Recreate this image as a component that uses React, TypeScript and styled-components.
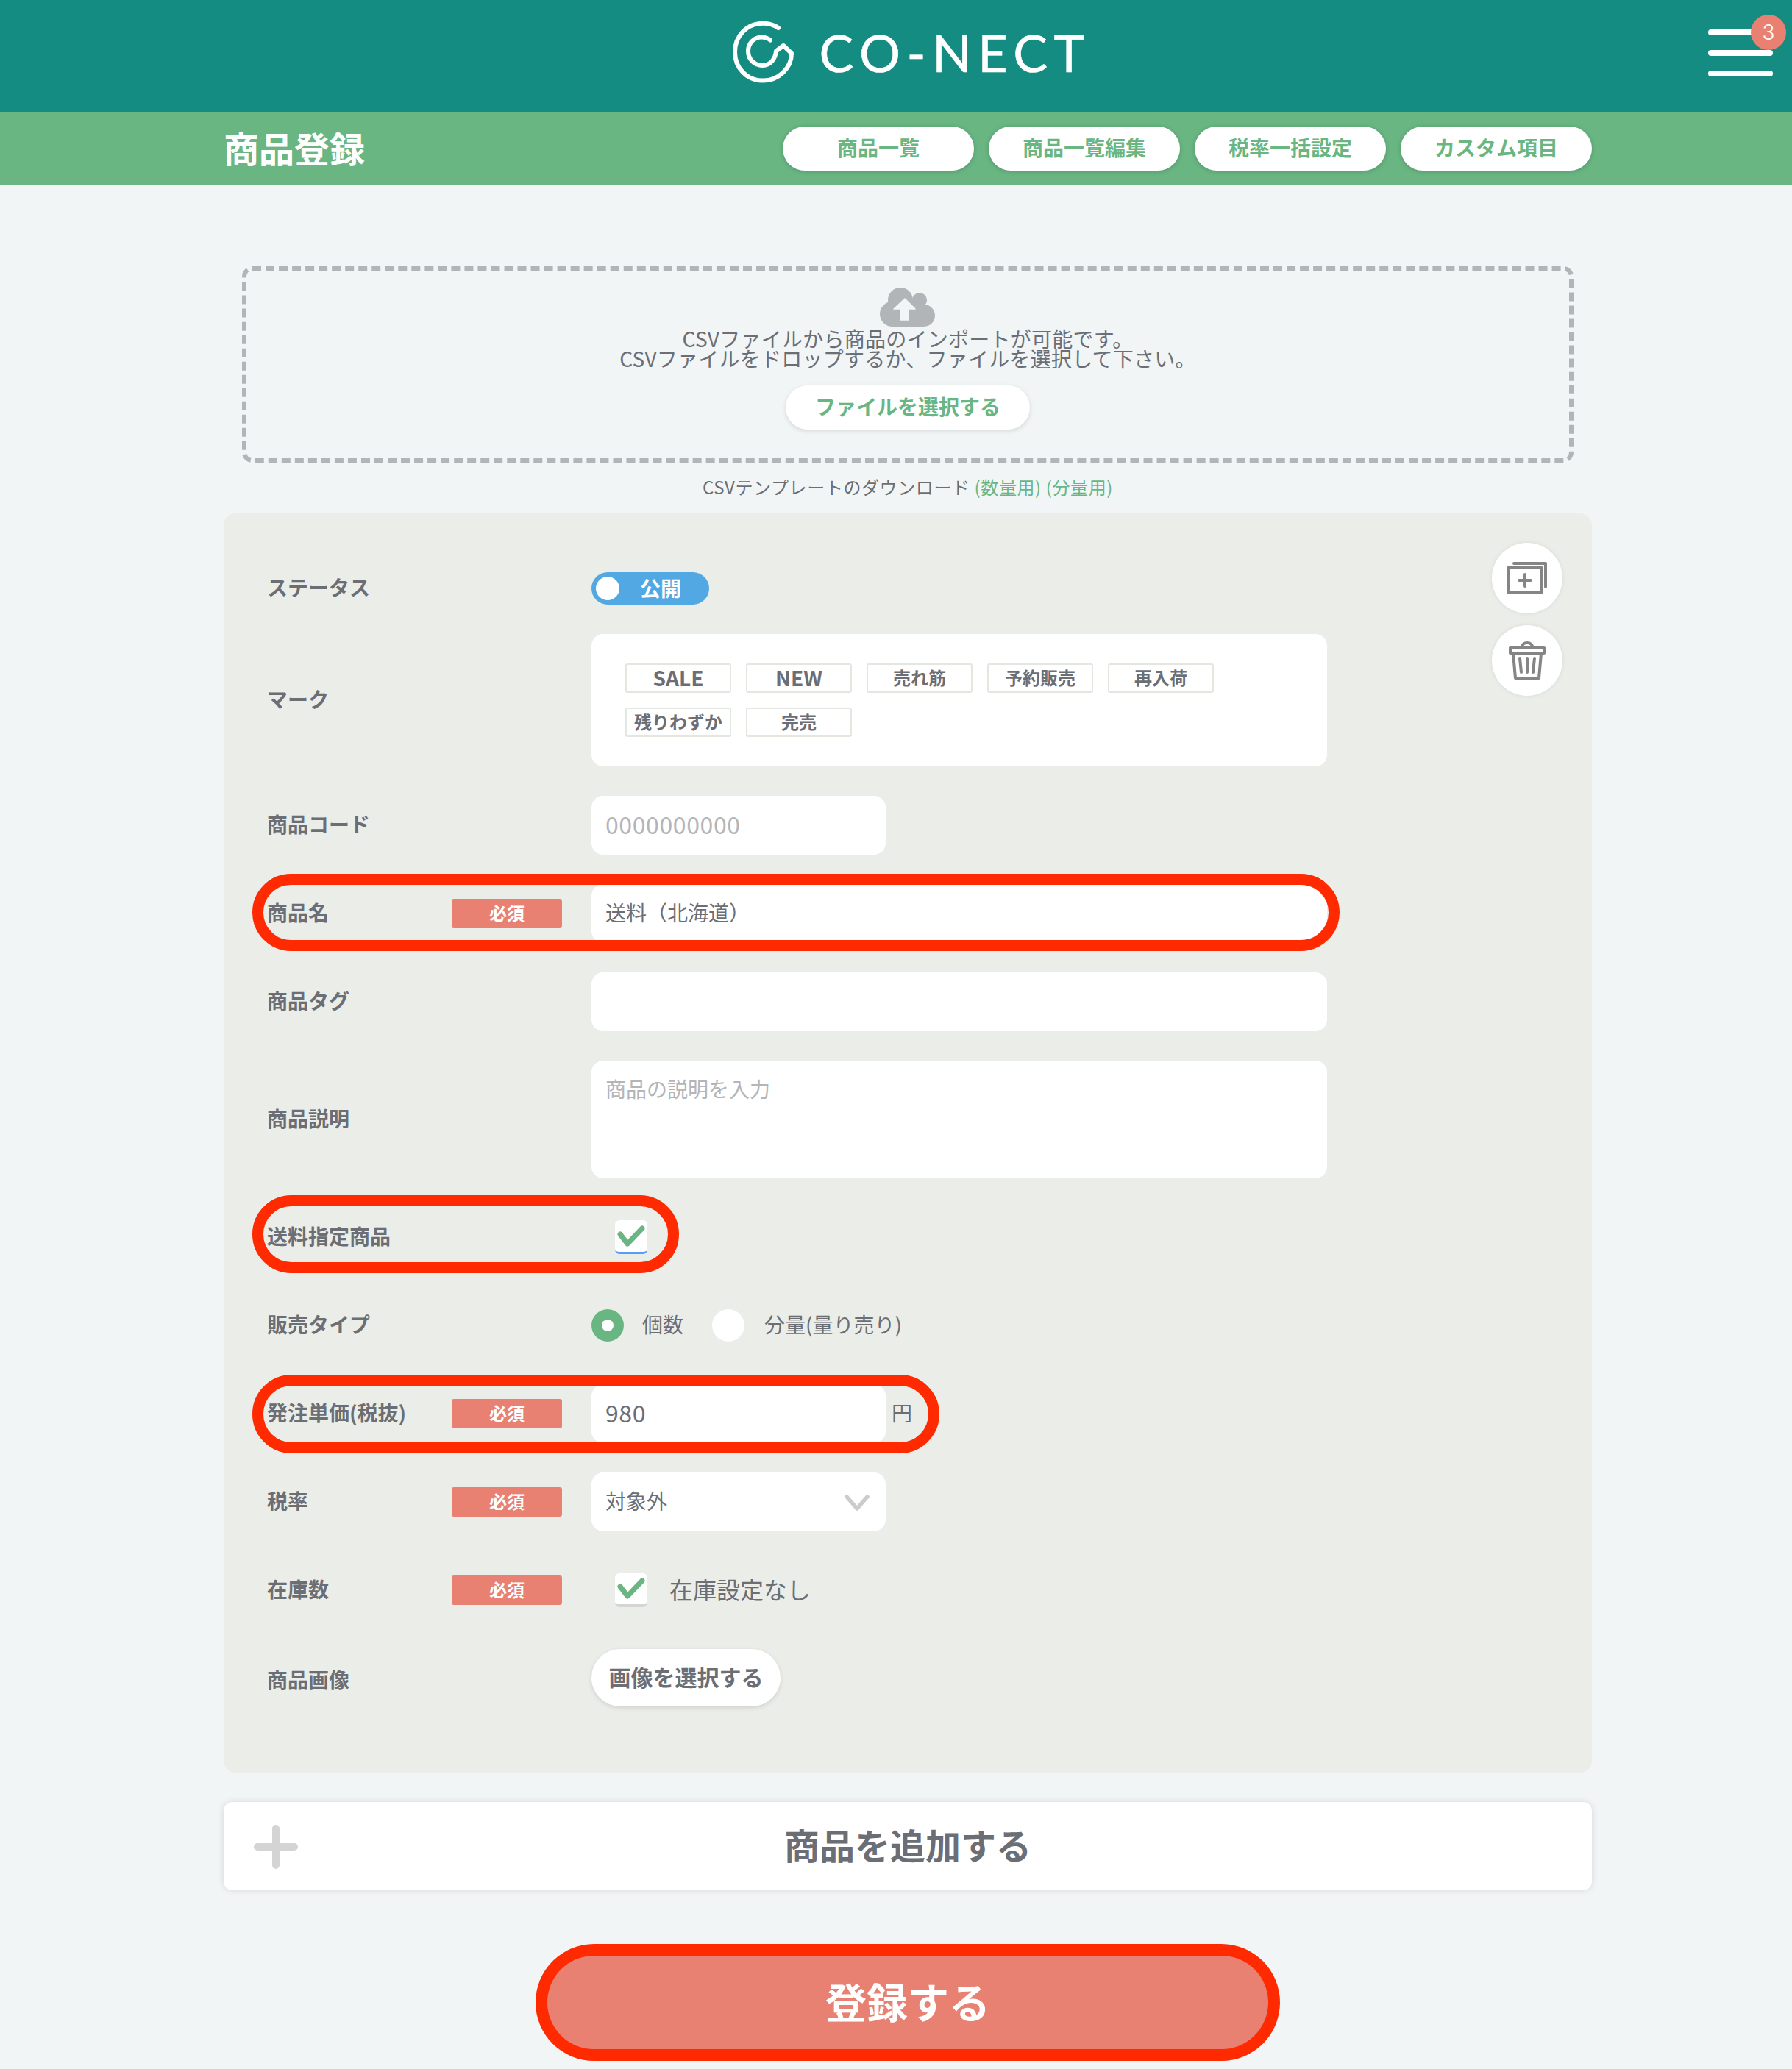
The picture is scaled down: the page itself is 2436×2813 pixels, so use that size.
import styled, { createGlobalStyle } from "styled-components"

const GREEN = "#69b683"
const TEXT = "#6b6e75"
const CORAL = "#e98172"
const RED = "#ff2a00"
const PAGE_BG = "#f1f5f6"

const GlobalStyle = createGlobalStyle`
    html, body {
        margin: 0;
        padding: 0;
        background: ${PAGE_BG};
    }
    * {
        box-sizing: border-box;
    }
    body {
        font-family: "Noto Sans CJK JP", "Noto Sans", sans-serif;
        color: ${TEXT};
    }
`

const Header = styled.header`
    height: 152px;
    background: #148c82;
    display: grid;
    grid-template-columns: 304px 1860px 1fr;
    align-items: center;
`

const Logo = styled.div`
    grid-column: 2;
    display: flex;
    justify-content: center;
    align-items: center;
    gap: 34px;
    color: #fff;
    padding-bottom: 10px;
    padding-left: 10px;
`

const LogoText = styled.span`
    font-family: "Lato", sans-serif;
    font-size: 70px;
    line-height: 1;
    font-weight: 400;
    letter-spacing: 8.6px;
    -webkit-text-stroke: 0.6px #fff;
`

const Menu = styled.div`
    position: relative;
    grid-column: 3;
    justify-self: start;
    margin-left: 158px;
    width: 88px;
    display: flex;
    flex-direction: column;
    gap: 20px;
    margin-top: -8px;
`

const MenuBar = styled.span`
    display: block;
    height: 8px;
    border-radius: 4px;
    background: #fff;
`

const MenuBadge = styled.span`
    position: absolute;
    left: 58px;
    top: -20px;
    width: 48px;
    height: 48px;
    border-radius: 50%;
    background: ${CORAL};
    color: #fff;
    font-family: "Inter", sans-serif;
    font-size: 28px;
    font-weight: 300;
    display: flex;
    align-items: center;
    justify-content: center;
`

const SubBarWrap = styled.div`
    background: ${GREEN};
`

const SubBar = styled.div`
    height: 100px;
    padding-left: 304px;
    display: flex;
    align-items: center;
    width: 2164px;
    justify-content: space-between;
`

const PageTitle = styled.h1`
    margin: 0;
    padding-bottom: 5px;
    color: #fff;
    font-size: 48px;
    font-weight: 700;
`

const SubNav = styled.nav`
    display: flex;
    gap: 20px;
`

const SubNavButton = styled.a`
    width: 260px;
    height: 60px;
    padding-bottom: 5px;
    border-radius: 30px;
    background: #fff;
    color: ${GREEN};
    font-size: 28px;
    font-weight: 700;
    display: flex;
    align-items: center;
    justify-content: center;
    box-shadow: 0 1px 6px rgba(0, 0, 0, 0.2);
`

const Main = styled.main`
    margin-left: 304px;
    width: 1860px;
    padding: 110px 0 27px;
`

const DropZone = styled.div`
    width: 1810px;
    height: 267px;
    margin-left: 25px;
    border: 6px dashed #b1b5b8;
    border-radius: 14px;
    padding-top: 23px;
    display: flex;
    flex-direction: column;
    align-items: center;
`

const CloudIcon = styled.svg`
    flex-shrink: 0;
`

const DropText = styled.p`
    margin: 3px 0 0;
    font-size: 28px;
    line-height: 27px;
    letter-spacing: 0.25px;
    text-align: center;
`

const FileButton = styled.a`
    margin-top: 23px;
    width: 332px;
    height: 60px;
    padding-bottom: 5px;
    border-radius: 30px;
    background: #fff;
    color: ${GREEN};
    font-size: 28px;
    font-weight: 700;
    display: flex;
    align-items: center;
    justify-content: center;
    box-shadow: 0 2px 6px rgba(0, 0, 0, 0.12);
`

const TemplateNote = styled.p`
    margin: 20px 0 23px;
    font-size: 24px;
    line-height: 26px;
    letter-spacing: 0.6px;
    text-align: center;
`

const GreenLink = styled.a`
    color: ${GREEN};
`

const Panel = styled.section`
    position: relative;
    background: #ebede8;
    border-radius: 16px;
    padding: 80px 0 88px;
    display: flex;
    flex-direction: column;
    gap: 40px;
`

const SideTools = styled.div`
    position: absolute;
    top: 40px;
    right: 40px;
    display: flex;
    flex-direction: column;
    gap: 16px;
`

const SideButton = styled.button`
    width: 96px;
    height: 96px;
    border: 0;
    padding: 0;
    border-radius: 50%;
    background: #fff;
    box-shadow: 0 0 6px rgba(0, 0, 0, 0.08);
    display: flex;
    align-items: center;
    justify-content: center;
`

const Row = styled.div<{ $height?: number }>`
    position: relative;
    height: ${(p) => p.$height ?? 80}px;
    padding-left: 59px;
    display: flex;
    align-items: center;
`

const LabelCell = styled.div`
    width: 441px;
    padding-right: 40px;
    display: flex;
    align-items: center;
    justify-content: space-between;
    flex-shrink: 0;
`

const Label = styled.label<{ $offset?: number }>`
    padding-bottom: 4px;
    font-size: 28px;
    font-weight: 700;
    white-space: nowrap;
    margin-top: ${(p) => p.$offset ?? 0}px;
`

const Required = styled.span`
    width: 150px;
    height: 40px;
    padding-bottom: 4px;
    border-radius: 3px;
    background: ${CORAL};
    color: #fff;
    font-size: 24px;
    font-weight: 700;
    display: flex;
    align-items: center;
    justify-content: center;
`

const Toggle = styled.div`
    width: 160px;
    height: 44px;
    border-radius: 22px;
    background: #52a8e3;
    padding-left: 6px;
    display: flex;
    align-items: center;
    gap: 28px;
`

const ToggleKnob = styled.span`
    width: 32px;
    height: 32px;
    border-radius: 50%;
    background: #fff;
`

const ToggleText = styled.span`
    padding-bottom: 3px;
    color: #fff;
    font-size: 28px;
    font-weight: 700;
`

const MarkBox = styled.div`
    width: 1000px;
    height: 180px;
    border-radius: 16px;
    background: #fff;
    padding: 40px 46px;
    display: flex;
    flex-wrap: wrap;
    align-content: flex-start;
    gap: 20px;
`

const Chip = styled.span<{ $latin?: boolean }>`
    width: 144px;
    height: 40px;
    padding-bottom: 2px;
    border: 2px solid #e2e7e0;
    border-bottom-width: 3px;
    border-radius: 3px;
    font-size: ${(p) => (p.$latin ? 28 : 24)}px;
    font-weight: 700;
    display: flex;
    align-items: center;
    justify-content: center;
`

const TextInput = styled.input<{ $width?: number }>`
    width: ${(p) => p.$width ?? 1000}px;
    height: 80px;
    border: 0;
    outline: 0;
    border-radius: 16px;
    background: #fff;
    padding: 0 19px 4px;
    font-family: inherit;
    font-size: 28px;
    color: ${TEXT};

    &::placeholder {
        color: #b3b5b9;
        opacity: 1;
    }
`

const DigitInput = styled(TextInput)`
    font-size: 32px;
    letter-spacing: 0.6px;
`

const TextArea = styled.textarea`
    width: 1000px;
    height: 160px;
    border: 0;
    outline: 0;
    resize: none;
    border-radius: 16px;
    background: #fff;
    padding: 24px 19px;
    font-family: inherit;
    font-size: 28px;
    line-height: 1;

    &::placeholder {
        color: #b3b5b9;
        opacity: 1;
    }
`

const CheckBox = styled.span<{ $focused?: boolean }>`
    width: 44px;
    height: 46px;
    margin-left: 32px;
    border-radius: 6px;
    background: #fff;
    border-bottom: ${(p) => (p.$focused ? "3px solid #5a9cf5" : "4px solid #d5d6d2")};
    display: flex;
    align-items: center;
    justify-content: center;
`

const RadioDot = styled.span<{ $on?: boolean }>`
    width: 44px;
    height: 44px;
    border-radius: 50%;
    background: ${(p) => (p.$on ? GREEN : "#fff")};
    display: flex;
    align-items: center;
    justify-content: center;

    &::after {
        content: "";
        width: 16px;
        height: 16px;
        border-radius: 50%;
        background: #fff;
    }
`

const OptionText = styled.span<{ $left: number; $right?: number; $size?: number }>`
    margin-left: ${(p) => p.$left}px;
    margin-right: ${(p) => p.$right ?? 0}px;
    padding-bottom: 4px;
    font-size: ${(p) => p.$size ?? 28}px;
`

const Unit = styled.span`
    margin-left: 8px;
    padding-bottom: 4px;
    font-size: 28px;
`

const SelectBox = styled.div`
    width: 400px;
    height: 80px;
    border-radius: 16px;
    background: #fff;
    padding: 0 22px 0 19px;
    font-size: 28px;
    display: flex;
    align-items: center;
    justify-content: space-between;
`

const SelectText = styled.span`
    padding-bottom: 4px;
`

const ImageButton = styled.a`
    width: 257px;
    height: 78px;
    padding-bottom: 5px;
    align-self: flex-start;
    border-radius: 39px;
    background: #fff;
    font-size: 30px;
    font-weight: 700;
    display: flex;
    align-items: center;
    justify-content: center;
    box-shadow: 0 2px 6px rgba(0, 0, 0, 0.12);
`

const Highlight = styled.span<{ $top: number; $width: number; $height: number }>`
    position: absolute;
    left: 39px;
    top: ${(p) => p.$top}px;
    width: ${(p) => p.$width}px;
    height: ${(p) => p.$height}px;
    border: 15px solid ${RED};
    border-radius: 54px;
    pointer-events: none;
`

const AddBar = styled.div`
    position: relative;
    margin-top: 40px;
    height: 120px;
    padding-bottom: 6px;
    border-radius: 12px;
    background: #fff;
    box-shadow: 0 0 10px rgba(0, 0, 0, 0.12);
    font-size: 48px;
    font-weight: 700;
    display: flex;
    align-items: center;
    justify-content: center;
`

const AddIcon = styled.svg`
    position: absolute;
    left: 41px;
    top: 31px;
`

const SubmitButton = styled.button`
    display: block;
    margin: 89px auto 0;
    width: 980px;
    height: 127px;
    padding: 0 0 6px;
    border: 0;
    border-radius: 64px;
    background: ${CORAL};
    box-shadow: 0 0 0 16px ${RED};
    color: #fff;
    font-family: inherit;
    font-size: 56px;
    font-weight: 700;
`

const LogoMark = () => (
    <svg width="84" height="84" viewBox="0 0 84 84" fill="none" stroke="currentColor" strokeWidth="6" strokeLinecap="round" strokeLinejoin="round">
        <path d="M62 9C56 4.5 48 2.8 41 2.8C19 2.8 3 20 3 42C3 63 19 80.5 41 80.5C63 80.5 80 63 80 43.5L69 33L59 40.5C58 50 52 60 40.5 60C29 60 21 51 21 40.5C21 30 29 21.5 39 21.5C44 21.5 48 23 51 25.5" />
    </svg>
)

const CheckMark = () => (
    <svg width="38" height="30" viewBox="0 0 38 30" fill="none" stroke={GREEN} strokeWidth="7" strokeLinecap="round" strokeLinejoin="round">
        <path d="M4 12L14 25L34 4" />
    </svg>
)

const marks = ["SALE", "NEW", "売れ筋", "予約販売", "再入荷", "残りわずか", "完売"]
const navItems = ["商品一覧", "商品一覧編集", "税率一括設定", "カスタム項目"]

export default function App() {
    return (
        <>
            <GlobalStyle />
            <Header>
                <Logo>
                    <LogoMark />
                    <LogoText>CO-NECT</LogoText>
                </Logo>
                <Menu>
                    <MenuBar />
                    <MenuBar />
                    <MenuBar />
                    <MenuBadge>3</MenuBadge>
                </Menu>
            </Header>
            <SubBarWrap>
                <SubBar>
                    <PageTitle>商品登録</PageTitle>
                    <SubNav>
                        {navItems.map((item) => (
                            <SubNavButton key={item}>{item}</SubNavButton>
                        ))}
                    </SubNav>
                </SubBar>
            </SubBarWrap>
            <Main>
                <DropZone>
                    <CloudIcon width="76" height="53" viewBox="0 0 76 53">
                        <g fill="#b1b5b8">
                            <circle cx="28" cy="17" r="17" />
                            <circle cx="54" cy="17" r="10" />
                            <circle cx="17" cy="36" r="17" />
                            <circle cx="60" cy="38" r="15" />
                            <rect x="17" y="17" width="43" height="36" />
                        </g>
                        <path fill={PAGE_BG} strokeLinejoin="round" stroke={PAGE_BG} strokeWidth="1.5" d="M34 15L19 29H28V44H39V29H48Z" />
                    </CloudIcon>
                    <DropText>
                        CSVファイルから商品のインポートが可能です。
                        <br />
                        CSVファイルをドロップするか、ファイルを選択して下さい。
                    </DropText>
                    <FileButton>ファイルを選択する</FileButton>
                </DropZone>
                <TemplateNote>
                    CSVテンプレートのダウンロード <GreenLink>(数量用)</GreenLink> <GreenLink>(分量用)</GreenLink>
                </TemplateNote>
                <Panel>
                    <SideTools>
                        <SideButton aria-label="追加">
                            <svg width="56" height="44" viewBox="0 0 56 44" fill="none" stroke="#858585" strokeWidth="4" strokeLinecap="round" strokeLinejoin="round">
                                <path d="M10 2H53V34" />
                                <rect x="2" y="8" width="46" height="34" />
                                <path d="M25 17V33M17 25H33" />
                            </svg>
                        </SideButton>
                        <SideButton aria-label="削除">
                            <svg width="50" height="52" viewBox="0 0 50 52" fill="none" stroke="#858585" strokeWidth="4" strokeLinecap="round" strokeLinejoin="round">
                                <path d="M2 8H48V16H2Z" />
                                <path d="M18 8C18 4 21 2 25 2C29 2 32 4 32 8" />
                                <path d="M6 16L9 50H41L44 16" />
                                <path d="M15 23L17 42M25 23V42M35 23L33 42" />
                            </svg>
                        </SideButton>
                    </SideTools>

                    <Row $height={44}>
                        <LabelCell>
                            <Label>ステータス</Label>
                        </LabelCell>
                        <Toggle>
                            <ToggleKnob />
                            <ToggleText>公開</ToggleText>
                        </Toggle>
                    </Row>

                    <Row $height={180}>
                        <LabelCell>
                            <Label>マーク</Label>
                        </LabelCell>
                        <MarkBox>
                            {marks.map((mark) => (
                                <Chip key={mark} $latin={/^[A-Z]+$/.test(mark)}>
                                    {mark}
                                </Chip>
                            ))}
                        </MarkBox>
                    </Row>

                    <Row>
                        <LabelCell>
                            <Label>商品コード</Label>
                        </LabelCell>
                        <DigitInput $width={400} placeholder="0000000000" readOnly />
                    </Row>

                    <Row>
                        <LabelCell>
                            <Label>商品名</Label>
                            <Required>必須</Required>
                        </LabelCell>
                        <TextInput defaultValue="送料（北海道）" readOnly />
                        <Highlight $top={-14} $width={1478} $height={105} />
                    </Row>

                    <Row>
                        <LabelCell>
                            <Label>商品タグ</Label>
                        </LabelCell>
                        <TextInput readOnly />
                    </Row>

                    <Row $height={160}>
                        <LabelCell>
                            <Label>商品説明</Label>
                        </LabelCell>
                        <TextArea placeholder="商品の説明を入力" readOnly />
                    </Row>

                    <Row>
                        <LabelCell>
                            <Label>送料指定商品</Label>
                        </LabelCell>
                        <CheckBox $focused>
                            <CheckMark />
                        </CheckBox>
                        <Highlight $top={-17} $width={580} $height={106} />
                    </Row>

                    <Row>
                        <LabelCell>
                            <Label>販売タイプ</Label>
                        </LabelCell>
                        <RadioDot $on />
                        <OptionText $left={25} $right={39}>個数</OptionText>
                        <RadioDot />
                        <OptionText $left={27}>分量(量り売り)</OptionText>
                    </Row>

                    <Row>
                        <LabelCell>
                            <Label>発注単価(税抜)</Label>
                            <Required>必須</Required>
                        </LabelCell>
                        <DigitInput $width={400} defaultValue="980" readOnly />
                        <Unit>円</Unit>
                        <Highlight $top={-13} $width={934} $height={107} />
                    </Row>

                    <Row>
                        <LabelCell>
                            <Label>税率</Label>
                            <Required>必須</Required>
                        </LabelCell>
                        <SelectBox>
                            <SelectText>対象外</SelectText>
                            <svg width="34" height="24" viewBox="0 0 34 24" fill="none" stroke="#cccccc" strokeWidth="5.5" strokeLinecap="round" strokeLinejoin="round">
                                <path d="M3 5L17 21L31 5" />
                            </svg>
                        </SelectBox>
                    </Row>

                    <Row>
                        <LabelCell>
                            <Label>在庫数</Label>
                            <Required>必須</Required>
                        </LabelCell>
                        <CheckBox>
                            <CheckMark />
                        </CheckBox>
                        <OptionText $left={30} $size={32}>在庫設定なし</OptionText>
                    </Row>

                    <Row>
                        <LabelCell>
                            <Label $offset={6}>商品画像</Label>
                        </LabelCell>
                        <ImageButton>画像を選択する</ImageButton>
                    </Row>
                </Panel>

                <AddBar>
                    <AddIcon width="60" height="60" viewBox="0 0 60 60" fill="#d4d4d4">
                        <rect x="25" y="0" width="10" height="60" rx="5" />
                        <rect x="0" y="25" width="60" height="10" rx="5" />
                    </AddIcon>
                    商品を追加する
                </AddBar>
                <SubmitButton>登録する</SubmitButton>
            </Main>
        </>
    )
}
